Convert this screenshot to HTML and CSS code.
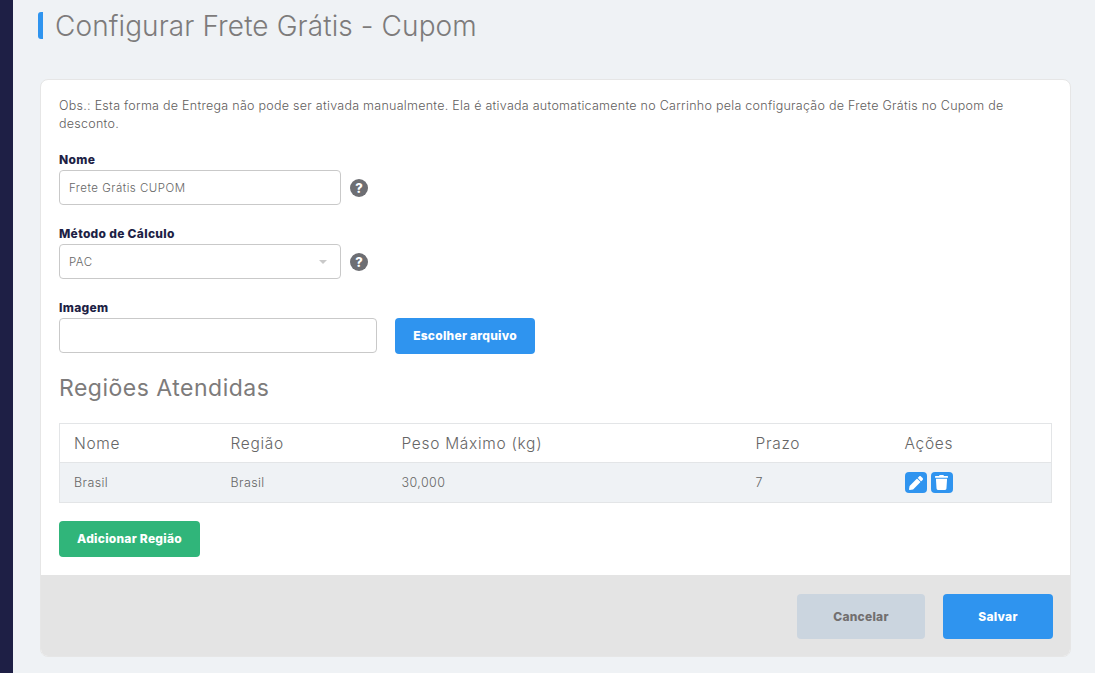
FILE: index.html
```html
<!DOCTYPE html>
<html lang="pt-BR">
<head>
<meta charset="utf-8">
<title>Configurar Frete Grátis - Cupom</title>
<link rel="stylesheet" href="styles.css">
</head>
<body>
<div class="app">
  <aside class="sidebar"></aside>
  <main class="main">
    <h1 class="page-title">Configurar Frete Grátis - Cupom</h1>
    <section class="card">
      <div class="card-body">
        <p class="note">Obs.: Esta forma de Entrega não pode ser ativada manualmente. Ela é ativada automaticamente no Carrinho pela configuração de Frete Grátis no Cupom de desconto.</p>
        <div class="field">
          <label class="label">Nome</label>
          <div class="row">
            <div class="input input-md">Frete Grátis CUPOM</div>
            <span class="help">?</span>
          </div>
        </div>
        <div class="field">
          <label class="label">Método de Cálculo</label>
          <div class="row">
            <div class="input input-md input-select">PAC<span class="caret"></span></div>
            <span class="help">?</span>
          </div>
        </div>
        <div class="field field-file">
          <label class="label">Imagem</label>
          <div class="row row-file">
            <div class="input input-lg"></div>
            <button class="btn btn-file">Escolher arquivo</button>
          </div>
        </div>
        <h2 class="section-title">Regiões Atendidas</h2>
        <table class="table">
          <thead>
            <tr><th class="c1">Nome</th><th class="c2">Região</th><th class="c3">Peso Máximo (kg)</th><th class="c4">Prazo</th><th>Ações</th></tr>
          </thead>
          <tbody>
            <tr>
              <td>Brasil</td><td>Brasil</td><td>30,000</td><td>7</td>
              <td>
                <div class="actions">
                  <span class="icon-btn"><svg viewBox="0 0 512 512" width="14" height="14"><path fill="#fff" d="M497.900 142.100l-46.100 46.100c-4.700 4.700-12.300 4.700-17 0l-111-111c-4.700-4.700-4.700-12.300 0-17l46.100-46.100c18.700-18.700 49.100-18.700 67.900 0l60.100 60.100c18.800 18.700 18.800 49.100 0 67.900zM284.200 99.800L21.600 362.400.4 483.900c-2.900 16.400 11.400 30.600 27.800 27.800l121.500-21.300 262.600-262.600c4.700-4.700 4.700-12.300 0-17l-111-111c-4.800-4.700-12.400-4.700-17.100 0z"/></svg></span>
                  <span class="icon-btn"><svg viewBox="0 0 448 512" width="13" height="15"><path fill="#fff" d="M432 32H312l-9.400-18.700A24 24 0 0 0 281.100 0H166.800a23.700 23.700 0 0 0-21.400 13.300L136 32H16A16 16 0 0 0 0 48v32a16 16 0 0 0 16 16h416a16 16 0 0 0 16-16V48a16 16 0 0 0-16-16zM53.200 467a48 48 0 0 0 47.900 45h245.800a48 48 0 0 0 47.900-45L416 128H32z"/></svg></span>
                </div>
              </td>
            </tr>
          </tbody>
        </table>
        <button class="btn btn-add">Adicionar Região</button>
      </div>
      <footer class="card-footer">
        <button class="btn btn-cancel">Cancelar</button>
        <button class="btn btn-save">Salvar</button>
      </footer>
    </section>
  </main>
</div>
</body>
</html>
```
FILE: styles.css
```css
* { box-sizing: border-box; }
html, body { margin: 0; height: 100%; }
body {
  background: #eff2f5;
  font-family: "Inter", "Liberation Sans", sans-serif;
  color: #726f6f;
  overflow: hidden;
}
.app { display: flex; height: 673px; }
.sidebar { width: 13px; background: #1e1f45; flex: none; }
.main { flex: 1; padding: 12px 24px 0 27px; min-width: 0; }
.page-title {
  margin: 0 0 40px -2px;
  height: 27px;
  padding-left: 12px;
  border-left: 5px solid #2f94ef;
  border-radius: 3px;
  font-size: 28px;
  font-weight: 350;
  line-height: 29px;
  letter-spacing: 0.1px;
  color: #7d7b7b;
}
.card {
  background: #fff;
  border: 1px solid #e6e6e6;
  border-radius: 8px;
  overflow: hidden;
  height: 578px;
  display: flex;
  flex-direction: column;
}
.card-body { flex: 1; padding: 17px 18px 0; }
.note { margin: 0 0 17px; font-size: 12.5px; font-weight: 300; line-height: 18px; letter-spacing: 0.27px; color: #5f5d5d; }
.field { margin-bottom: 19px; }
.label { display: block; height: 20px; padding-top: 1px; font-size: 12px; font-weight: 800; line-height: 18px; letter-spacing: 0.3px; color: #1e1f45; }
.row { display: flex; align-items: center; gap: 9px; }
.input {
  height: 35px;
  background: #fff;
  border: 1px solid #c9c9c9;
  border-radius: 4px;
  padding: 0 9px;
  font-size: 11.5px;
  font-weight: 300;
  line-height: 35px;
  letter-spacing: 0.5px;
  color: #666;
}
.input-md { width: 282px; }
.input-lg { width: 318px; }
.input-select { position: relative; }
.caret {
  position: absolute;
  right: 13px;
  top: 15px;
  border-left: 4px solid transparent;
  border-right: 4px solid transparent;
  border-top: 4px solid #c9c9c9;
}
.help {
  width: 18px; height: 18px; border-radius: 50%;
  background: #6d6e73; color: #fff;
  font-size: 13px; font-weight: 800; line-height: 18px; text-align: center;
}
.row-file { gap: 18px; align-items: flex-start; }
.field-file { margin-bottom: 20px; }
.btn {
  border: 0;
  border-radius: 4px;
  font-family: inherit;
  font-size: 12px;
  font-weight: 800;
  letter-spacing: 0.25px;
  color: #fff;
  padding: 0 0 2px;
}
.btn-file { width: 140px; height: 36px; background: #2f94ef; }
.section-title { margin: 0 0 21px; font-size: 23px; font-weight: 400; line-height: 28px; letter-spacing: 0.5px; color: #7d7b7b; }
.table { width: 993px; border-collapse: collapse; border: 1px solid #e3e5e7; table-layout: fixed; }
.table th { height: 39px; border-bottom: 1px solid #e3e5e7; text-align: left; padding: 0 0 0 14px; font-size: 15.5px; font-weight: 300; letter-spacing: 0.7px; color: #666; }
.table td { height: 40px; background: #eff2f5; padding: 0 0 0 14px; font-size: 12.5px; font-weight: 300; letter-spacing: 0.4px; color: #666; }
.c1 { width: 157px; }
.c2 { width: 171px; }
.c3 { width: 354px; }
.c4 { width: 149px; }
.actions { display: flex; gap: 4px; }
.icon-btn { width: 22px; height: 21px; background: #2f94ef; border-radius: 4px; display: flex; align-items: center; justify-content: center; }
.btn-add { display: block; width: 141px; height: 36px; margin-top: 18px; background: #30b57a; }
.card-footer { height: 81px; background: #e4e4e4; display: flex; justify-content: flex-end; align-items: flex-start; gap: 18px; padding: 19px 17px 0 0; flex: none; }
.card-footer .btn { padding: 0; }
.btn-cancel { width: 128px; height: 45px; background: #cbd5df; color: #726f6f; }
.btn-save { width: 110px; height: 45px; background: #2f94ef; }
```
